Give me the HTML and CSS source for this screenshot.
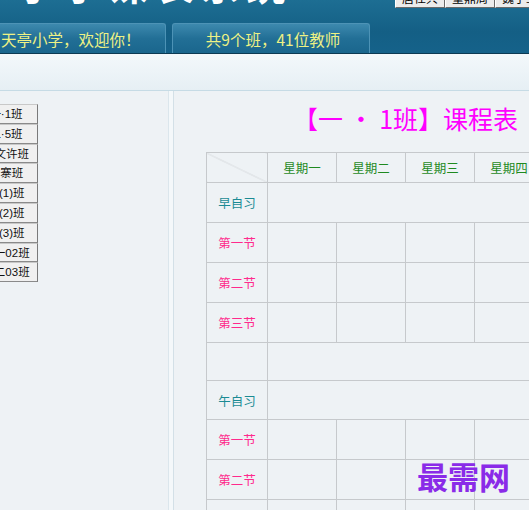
FILE: index.html
```html
<!DOCTYPE html>
<html lang="zh">
<head>
<meta charset="utf-8">
<title>课程表</title>
<link rel="stylesheet" href="styles.css">
</head>
<body>
<div class="header">
  <div class="topline">
    <div class="logo">小学课表系统<span class="year">2013</span></div>
    <div class="teachers">
      <span class="tbtn">唐仕兵</span>
      <span class="tbtn">董鼎周</span>
      <span class="tbtn">魏子玉</span>
    </div>
  </div>
  <div class="tabs">
    <div class="tab tab1">天亭小学，欢迎你！</div>
    <div class="tab tab2">共9个班，41位教师</div>
  </div>
</div>
<div class="band"></div>
<div class="main">
  <div class="side">
    <div class="classes">
      <div class="cbtn">一·1班</div>
      <div class="cbtn">二·5班</div>
      <div class="cbtn">李文许班</div>
      <div class="cbtn">山寨班</div>
      <div class="cbtn">六(1)班</div>
      <div class="cbtn">六(2)班</div>
      <div class="cbtn">六(3)班</div>
      <div class="cbtn">幼一02班</div>
      <div class="cbtn">幼二03班</div>
    </div>
  </div>
  <div class="divider"></div>
  <div class="content">
    <div class="sheet">
      <h1 class="title">【一 · 1班】课程表</h1>
      <table class="grid">
        <colgroup>
          <col class="c0"><col class="cd"><col class="cd"><col class="cd"><col class="cd"><col class="cd">
        </colgroup>
        <tr class="head">
          <th class="corner"></th>
          <th>星期一</th><th>星期二</th><th>星期三</th><th>星期四</th><th>星期五</th>
        </tr>
        <tr><td class="lab self">早自习</td><td colspan="5"></td></tr>
        <tr><td class="lab">第一节</td><td></td><td></td><td></td><td></td><td></td></tr>
        <tr><td class="lab">第二节</td><td></td><td></td><td></td><td></td><td></td></tr>
        <tr><td class="lab">第三节</td><td></td><td></td><td></td><td></td><td></td></tr>
        <tr class="gap"><td class="lab"></td><td colspan="5"></td></tr>
        <tr class="noon"><td class="lab self">午自习</td><td colspan="5"></td></tr>
        <tr><td class="lab">第一节</td><td></td><td></td><td></td><td></td><td></td></tr>
        <tr><td class="lab">第二节</td><td></td><td></td><td></td><td></td><td></td></tr>
        <tr><td class="lab">第三节</td><td></td><td></td><td></td><td></td><td></td></tr>
      </table>
    </div>
  </div>
</div>
<div class="watermark">最需网</div>
</body>
</html>
```
FILE: styles.css
```css
html, body {
  margin: 0;
  padding: 0;
}
body {
  width: 529px;
  height: 510px;
  overflow: hidden;
  background: #eef2f5;
  font-family: "Noto Sans CJK SC", "Noto Sans", sans-serif;
  position: relative;
}
.header {
  height: 53px;
  background: linear-gradient(#1d6e93, #145f85 60%, #15628a);
  border-bottom: 1px solid #0c3a53;
  overflow: hidden;
}
.topline {
  height: 23px;
  display: flex;
  overflow: hidden;
}
.logo {
  flex: 1;
  min-width: 0;
  overflow: hidden;
  height: 44px;
  margin-top: -39px;
  padding-left: 16px;
  font-size: 40px;
  line-height: 44px;
  font-weight: bold;
  color: #ffffff;
  letter-spacing: 6px;
  white-space: nowrap;
}
.year {
  font-size: 12px;
  letter-spacing: 0;
  margin-left: 2px;
}
.teachers {
  display: flex;
  margin-top: -12px;
  margin-right: -16px;
  height: 20px;
  flex-shrink: 0;
}
.tbtn {
  width: 48px;
  height: 18px;
  border: 1px solid #6a6a6a;
  border-top-color: #ffffff;
  border-left-color: #ffffff;
  background: #ececec;
  font-size: 12px;
  line-height: 18px;
  text-align: center;
  color: #000;
}
.tabs {
  display: flex;
  gap: 6px;
  height: 30px;
}
.tab {
  box-sizing: border-box;
  height: 30px;
  border: 1px solid #4d93b6;
  border-bottom: none;
  border-radius: 3px 3px 0 0;
  background: linear-gradient(#3d89ae, #226f96 50%, #1a668d);
  color: #eef284;
  font-size: 15.5px;
  line-height: 30px;
  white-space: nowrap;
}
.tab1 {
  width: 166px;
  padding-left: 1px;
  border-left: none;
  border-radius: 0 3px 0 0;
}
.tab2 {
  width: 198px;
  text-align: center;
  padding-left: 4px;
}
.band {
  height: 36px;
  background: linear-gradient(#f3f8fb, #e6eff4);
  border-bottom: 1px solid #c6dbe5;
}
.main {
  display: flex;
  height: 420px;
}
.side {
  width: 167px;
  flex-shrink: 0;
  padding-top: 13px;
  background: #eef2f5;
  overflow: hidden;
}
.classes {
  width: 64px;
  margin-left: -26px;
  display: flex;
  flex-direction: column;
}
.cbtn {
  box-sizing: border-box;
  height: 19.8px;
  text-align: center;
  line-height: 18px;
  white-space: nowrap;
  overflow: hidden;
  background: #f0f0f0;
  border: 1px solid #c8c8c8;
  border-right-color: #7a7a7a;
  border-bottom-color: #8a8a8a;
  font-family: "Liberation Sans", "Noto Sans CJK SC", sans-serif;
  font-size: 11.5px;
  color: #111;
}
.divider {
  width: 6px;
  flex-shrink: 0;
  border-left: 1px solid #dbe6ec;
  border-right: 1px solid #d3e0e7;
  background: #f4f8fa;
  box-sizing: border-box;
  margin-left: 1px;
}
.content {
  flex: 1;
  padding-left: 32px;
  background: #eef2f5;
  overflow: hidden;
}
.sheet {
  width: 407px;
}
.title {
  margin: 0;
  padding-top: 11px;
  padding-right: 8px;
  height: 61px;
  box-sizing: border-box;
  text-align: center;
  font-size: 25px;
  line-height: 32px;
  font-weight: normal;
  color: #ff00ff;
  white-space: nowrap;
}
.grid {
  border-collapse: collapse;
  table-layout: fixed;
  width: 407px;
}
.c0 { width: 61px; }
.cd { width: 69px; }
.grid th, .grid td {
  border: 1px solid #c6c9cc;
  padding: 0;
  text-align: center;
  font-size: 12.5px;
  font-weight: normal;
}
.grid tr { height: 40px; }
.grid tr.head { height: 30px; }
.grid tr.gap { height: 38px; }
.grid tr.noon { height: 39px; }
.grid th {
  color: #1f8a1f;
}
.corner {
  background: linear-gradient(to top right, transparent calc(50% - 0.6px), #cfd2d5 50%, transparent calc(50% + 0.6px));
}
.lab {
  color: #ff2a8c;
}
.lab.self {
  color: #1b8b94;
}
.watermark {
  position: absolute;
  left: 417px;
  top: 456px;
  font-size: 31px;
  line-height: 40px;
  font-weight: bold;
  color: #8a2be8;
  font-family: "Noto Sans CJK SC", sans-serif;
}
```
